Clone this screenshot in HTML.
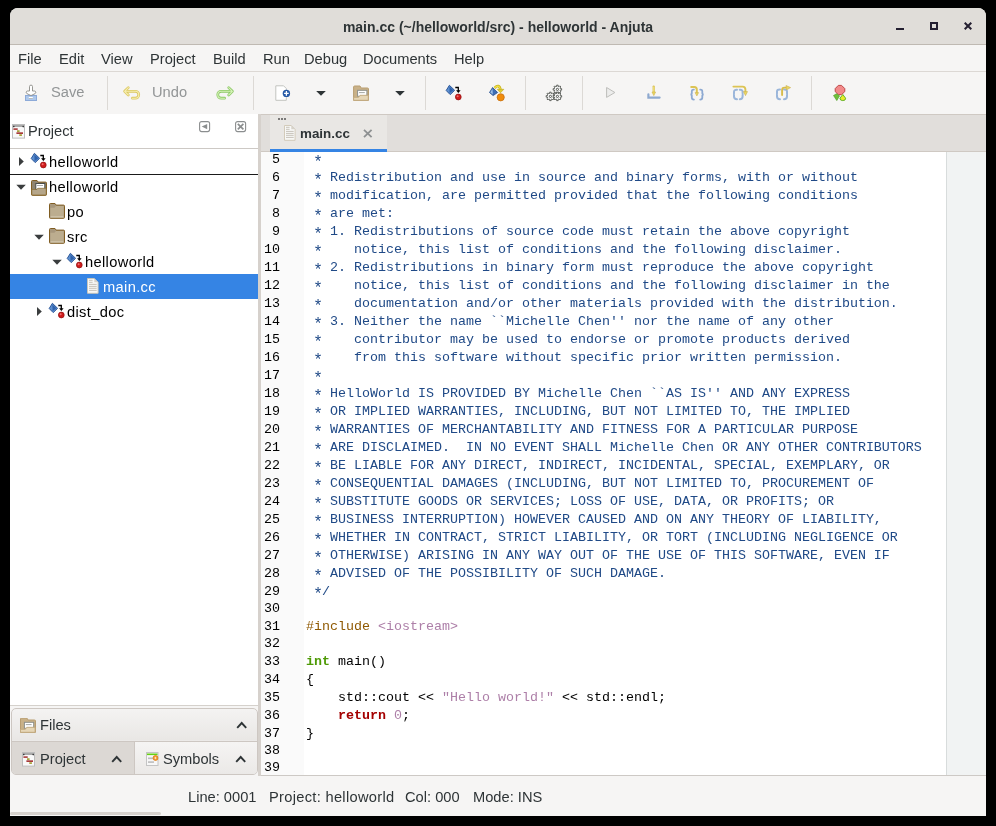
<!DOCTYPE html>
<html><head><meta charset="utf-8">
<style>
*{margin:0;padding:0;box-sizing:border-box}
html,body{width:996px;height:826px;background:#000;overflow:hidden;-webkit-font-smoothing:antialiased}
body>*{will-change:transform}
body{position:relative;font-family:"Liberation Sans",sans-serif;font-size:14.67px;color:#2e3436;--o:-3px}
.a{position:absolute}
.r{position:absolute;white-space:nowrap;line-height:17px}
#win{position:absolute;left:10px;top:8px;width:976px;height:808px;background:#f6f5f4;border-radius:8px 8px 0 0;overflow:hidden}
#title{position:absolute;left:10px;top:8px;width:976px;height:37px;background:#e0ddd9;border-bottom:1px solid #bfb9b2;border-radius:8px 8px 0 0}
#title .t{position:absolute;left:0;width:976px;top:11px;text-align:center;font-weight:bold;font-size:14px;color:#2e3436;line-height:17px}
.menu{position:absolute;top:51px;line-height:17px}
.sep{position:absolute;top:76px;width:1px;height:34px;background:#dcd9d5}
.gt{position:absolute;color:#929596;top:84px;line-height:17px}
.ln{position:absolute;left:258px;width:22px;text-align:right;font-family:"Liberation Mono",monospace;font-size:13.33px;line-height:18px;color:#000}
.cl{position:absolute;left:306px;white-space:pre;font-family:"Liberation Mono",monospace;font-size:13.33px;line-height:18px;color:#000}
.as{display:inline-block;position:relative;top:3px;transform:scale(1.2)}
.cm{color:#204a87}
.pp{color:#8f5902}
.st{color:#ad7fa8}
.ty{color:#4e9a06;font-weight:bold}
.kw{color:#a40000;font-weight:bold}
.tr{position:absolute;left:10px;width:248px;height:25px;line-height:25px;color:#000}
.tr span{position:absolute;top:1px;white-space:nowrap;letter-spacing:0.35px}
</style></head><body>
<div id="win"></div>
<div id="title"><div class="t">main.cc (~/helloworld/src) - helloworld - Anjuta</div></div>
<!-- window controls -->
<div class="a" style="left:896px;top:28px;width:8px;height:2px;background:#241f31"></div>
<div class="a" style="left:930px;top:22px;width:8px;height:8px;border:2px solid #241f31"></div>
<svg class="a" style="left:964px;top:22px" width="8" height="8" viewBox="0 0 8 8"><path d="M0.7 0.7L7.3 7.3M7.3 0.7L0.7 7.3" stroke="#241f31" stroke-width="2"/></svg>

<!-- menubar -->
<div class="a" style="left:10px;top:71px;width:976px;height:1px;background:#dcd8d4"></div>
<div class="menu" style="left:18px">File</div>
<div class="menu" style="left:59px">Edit</div>
<div class="menu" style="left:101px">View</div>
<div class="menu" style="left:150px">Project</div>
<div class="menu" style="left:213px">Build</div>
<div class="menu" style="left:263px">Run</div>
<div class="menu" style="left:304px">Debug</div>
<div class="menu" style="left:363px">Documents</div>
<div class="menu" style="left:454px">Help</div>

<!-- toolbar -->
<div class="gt" style="left:51px">Save</div>
<div class="sep" style="left:107px"></div>
<div class="gt" style="left:152px">Undo</div>
<div class="sep" style="left:253px"></div>
<div class="sep" style="left:425px"></div>
<div class="sep" style="left:525px"></div>
<div class="sep" style="left:582px"></div>
<div class="sep" style="left:811px"></div>
<!-- Save -->
<svg class="a" style="left:20px;top:80px" width="24" height="24" viewBox="0 0 24 24">
<rect x="5.5" y="15.5" width="11" height="5" fill="#adc8ec" stroke="#8daad8"/>
<rect x="8.8" y="17" width="4" height="1.7" fill="#fff"/>
<rect x="8.8" y="18.2" width="4" height="0.6" fill="#9a9a96"/>
<path d="M9.5,11 V6.6 a1.5,1.5 0 0 1 3,0 V11 h2 a1.4,1.4 0 0 1 0.6,2.6 L11,15.6 L6.9,13.6 A1.4,1.4 0 0 1 7.5,11 Z" fill="#fff" stroke="#8c8c88" stroke-width="0.9"/>
</svg>
<!-- Undo -->
<svg class="a" style="left:118px;top:80px" width="24" height="24" viewBox="0 0 24 24">
<g fill="none" stroke-linecap="round" stroke-linejoin="round">
<path d="M10.3,7.6 L6.6,11.3 L10.3,15 M7.5,11.3 H17.3 A3.4,3.4 0 0 1 17.3,18.2 H14.4" stroke="#dcc862" stroke-width="2.7"/>
<path d="M10.3,7.6 L6.6,11.3 L10.3,15 M7.5,11.3 H17.3 A3.4,3.4 0 0 1 17.3,18.2 H14.4" stroke="#f6eeb0" stroke-width="1.1"/>
</g></svg>
<!-- Redo -->
<svg class="a" style="left:213px;top:80px" width="24" height="24" viewBox="0 0 24 24">
<g fill="none" stroke-linecap="round" stroke-linejoin="round">
<path d="M15.7,7.6 L19.4,11.3 L15.7,15 M18.5,11.3 H8.2 A3.4,3.4 0 0 0 8.2,18.2 H11.6" stroke="#8cc866" stroke-width="2.7"/>
<path d="M15.7,7.6 L19.4,11.3 L15.7,15 M18.5,11.3 H8.2 A3.4,3.4 0 0 0 8.2,18.2 H11.6" stroke="#d6f2b8" stroke-width="1.1"/>
</g></svg>
<div class="sep" style="left:253px"></div>
<!-- New -->
<svg class="a" style="left:270px;top:80px" width="24" height="24" viewBox="0 0 24 24">
<path d="M5.8,5.8 H13.6 L16.3,8.5 V20.3 H5.8 Z" fill="#fff" stroke="#c2c4bf" stroke-width="1"/>
<circle cx="16.4" cy="13.4" r="3.7" fill="#2559a6"/>
<path d="M16.4,11.1 V15.7 M14.1,13.4 H18.7" stroke="#fff" stroke-width="1.3"/>
</svg>
<svg class="a" style="left:310px;top:80px" width="24" height="24" viewBox="0 0 24 24"><path d="M6.2,11.1 H15.8 L11,15.8 Z" fill="#2e3436"/></svg>
<!-- Open -->
<svg class="a" style="left:348px;top:80px" width="24" height="24" viewBox="0 0 24 24">
<path d="M5.6,20.3 V7 a1,1 0 0 1 1,-1 H12 l1.2,2 H19.5 a1,1 0 0 1 1,1 V20.3 Z" fill="#c9b188" stroke="#b89d70" stroke-width="1"/>
<rect x="9.6" y="10.3" width="9.3" height="6" fill="#fff" stroke="#8d8f8a" stroke-width="1"/>
<rect x="11" y="12.2" width="5.8" height="0.9" fill="#9b9d98"/>
<path d="M5.6,20.3 V17.3 H10.5 L12,15.3 H20.3 V20.3 Z" fill="#e6d6b6" stroke="#c1a87c" stroke-width="0.9"/>
</svg>
<svg class="a" style="left:389px;top:80px" width="24" height="24" viewBox="0 0 24 24"><path d="M6.2,11.1 H15.8 L11,15.8 Z" fill="#2e3436"/></svg>
<!-- Build 1 -->
<svg class="a" style="left:441px;top:80px" width="24" height="24" viewBox="0 0 24 24">
<path d="M8.4,5.3 L13.6,10.3 L9.2,14.6 L5.2,10.5 Z" fill="#5d8fcf" stroke="#2a5597" stroke-width="1"/>
<path d="M8.4,6.5 L8.6,13.2 L12.4,10.3 Z" fill="#2f62ad"/>
<path d="M14.3,7.5 H17.3 V11" fill="none" stroke="#000" stroke-width="1.3"/>
<path d="M15.1,10.2 H19.6 L17.35,12.9 Z" fill="#000"/>
<circle cx="17.3" cy="17" r="2.9" fill="#d01c1c" stroke="#8f0d0d" stroke-width="0.7"/>
<circle cx="16.6" cy="16.3" r="1" fill="#f07070"/>
</svg>
<!-- Build 2 -->
<svg class="a" style="left:485px;top:80px" width="24" height="24" viewBox="0 0 24 24">
<path d="M7.6,7.5 L12.6,12.5 L8.1,15.6 L4.5,12.5 Z" fill="#3d6db4" stroke="#234d8f" stroke-width="0.8"/>
<path d="M7.5,8.5 L7.8,14.5 L5.3,12.4 Z" fill="#9cc0e8"/>
<path d="M9.6,8 Q14,3.5 15.5,9.5" fill="none" stroke="#c8b21a" stroke-width="2.6"/>
<path d="M9.6,8 Q14,3.5 15.5,9.5" fill="none" stroke="#f2e34a" stroke-width="1.2"/>
<path d="M12.3,9.3 H18.8 L15.5,12.8 Z" fill="#e2cf2e" stroke="#b8a214" stroke-width="0.6"/>
<circle cx="15.7" cy="17.3" r="3.6" fill="#f08c0c" stroke="#c87010" stroke-width="0.8"/>
</svg>
<!-- Gears -->
<svg class="a" style="left:542px;top:80px" width="24" height="24" viewBox="0 0 24 24">
<g fill="#fff" stroke="#4f524e" stroke-width="0.9" stroke-linejoin="round">
<path d="M18.31,8.69 L19.63,8.63 L19.63,10.17 L18.31,10.11 L17.96,10.96 L18.94,11.85 L17.85,12.94 L16.96,11.96 L16.11,12.31 L16.17,13.63 L14.63,13.63 L14.69,12.31 L13.84,11.96 L12.95,12.94 L11.86,11.85 L12.84,10.96 L12.49,10.11 L11.17,10.17 L11.17,8.63 L12.49,8.69 L12.84,7.84 L11.86,6.95 L12.95,5.86 L13.84,6.84 L14.69,6.49 L14.63,5.17 L16.17,5.17 L16.11,6.49 L16.96,6.84 L17.85,5.86 L18.94,6.95 L17.96,7.84 Z"/>
<path d="M11.31,15.69 L12.63,15.63 L12.63,17.17 L11.31,17.11 L10.96,17.96 L11.94,18.85 L10.85,19.94 L9.96,18.96 L9.11,19.31 L9.17,20.63 L7.63,20.63 L7.69,19.31 L6.84,18.96 L5.95,19.94 L4.86,18.85 L5.84,17.96 L5.49,17.11 L4.17,17.17 L4.17,15.63 L5.49,15.69 L5.84,14.84 L4.86,13.95 L5.95,12.86 L6.84,13.84 L7.69,13.49 L7.63,12.17 L9.17,12.17 L9.11,13.49 L9.96,13.84 L10.85,12.86 L11.94,13.95 L10.96,14.84 Z"/>
<path d="M18.31,15.69 L19.63,15.63 L19.63,17.17 L18.31,17.11 L17.96,17.96 L18.94,18.85 L17.85,19.94 L16.96,18.96 L16.11,19.31 L16.17,20.63 L14.63,20.63 L14.69,19.31 L13.84,18.96 L12.95,19.94 L11.86,18.85 L12.84,17.96 L12.49,17.11 L11.17,17.17 L11.17,15.63 L12.49,15.69 L12.84,14.84 L11.86,13.95 L12.95,12.86 L13.84,13.84 L14.69,13.49 L14.63,12.17 L16.17,12.17 L16.11,13.49 L16.96,13.84 L17.85,12.86 L18.94,13.95 L17.96,14.84 Z"/>
<circle cx="15.4" cy="9.4" r="1.1" stroke-width="1"/><circle cx="15.4" cy="16.4" r="1.1" stroke-width="1"/><circle cx="8.4" cy="16.4" r="1.1" stroke-width="1"/>
</g></svg>
<!-- Run -->
<svg class="a" style="left:598px;top:80px" width="24" height="24" viewBox="0 0 24 24">
<path d="M8.6,7.5 L16.9,12.5 L8.6,17.4 Z" fill="#ececeb" stroke="#bdbdba" stroke-width="1"/>
</svg>
<!-- Step -->
<svg class="a" style="left:642px;top:80px" width="24" height="24" viewBox="0 0 24 24">
<path d="M6.4,14.4 V17.6 H17.6" fill="none" stroke="#8ea9cf" stroke-width="2.2" stroke-linecap="round"/>
<path d="M11.7,6.6 V12" stroke="#d9c052" stroke-width="2.2" stroke-linecap="round"/>
<path d="M11.7,6.6 V12" stroke="#f1e27c" stroke-width="1"/>
<path d="M10,12 H13.6 L11.8,15.6 Z" fill="#ecd860" stroke="#cdb249" stroke-width="0.6"/>
</svg>
<!-- Step in -->
<svg class="a" style="left:685px;top:80px" width="24" height="24" viewBox="0 0 24 24">
<g fill="none" stroke="#8eaad2" stroke-width="1.8" stroke-linecap="round">
<path d="M8.9,9.6 Q6.8,9.4 6.8,11.5 V13.4 Q6.8,14.5 5.4,14.5 Q6.8,14.5 6.8,15.6 V17.6 Q6.8,19.6 8.9,19.6"/>
<path d="M15.2,9.6 Q17.3,9.4 17.3,11.5 V13.4 Q17.3,14.5 18.7,14.5 Q17.3,14.5 17.3,15.6 V17.6 Q17.3,19.6 15.2,19.6"/>
</g>
<path d="M6.2,7 H9.3 Q11.8,7 11.8,9.6 V12.8" fill="none" stroke="#dcc454" stroke-width="2" stroke-linecap="round"/>
<path d="M10.1,12.6 H13.6 L11.85,15.9 Z" fill="#ecd860" stroke="#c9ae52" stroke-width="0.6"/>
</svg>
<!-- Step over -->
<svg class="a" style="left:727px;top:80px" width="24" height="24" viewBox="0 0 24 24">
<g fill="none" stroke="#9bb6da" stroke-width="2" stroke-linecap="round">
<path d="M10,9.8 Q7,9.6 7,12 V13.4 Q7,14 6,14 Q7,14 7,14.6 V16.6 Q7,19.2 10,19.2"/>
<path d="M12.8,9.8 Q15.6,9.6 15.6,12 V13.4 Q15.6,14 16.6,14 Q15.6,14 15.6,14.6 V16.6 Q15.6,19.2 12.8,19.2"/>
</g>
<path d="M6.4,6.6 H15.6 Q18.4,6.6 18.4,9.5 V12" fill="none" stroke="#dcc454" stroke-width="1.9" stroke-linecap="round"/>
<path d="M16.4,11.6 H20.5 L18.5,15.6 Z" fill="#ecd860" stroke="#c9ae52" stroke-width="0.6"/>
</svg>
<!-- Step out -->
<svg class="a" style="left:770px;top:80px" width="24" height="24" viewBox="0 0 24 24">
<g fill="none" stroke="#9bb6da" stroke-width="2" stroke-linecap="round">
<path d="M10,9.4 Q7,9.2 7,11.6 V13.4 Q7,14 6,14 Q7,14 7,14.6 V16.6 Q7,19.2 10,19.2"/>
<path d="M14,9.4 Q17,9.2 17,11.6 V13.4 Q17,14 18,14 Q17,14 17,14.6 V16.6 Q17,19.2 14,19.2"/>
</g>
<path d="M12.1,15 V10 Q12.1,7.6 14.5,7.6 H16.8" fill="none" stroke="#d8bc4a" stroke-width="1.9" stroke-linecap="round"/>
<path d="M16,5.5 L20.6,7.6 L16.4,9.9 Z" fill="#ecd860" stroke="#c9ae52" stroke-width="0.6"/>
</svg>
<!-- Debug -->
<svg class="a" style="left:827px;top:80px" width="24" height="24" viewBox="0 0 24 24">
<path d="M11.3,5.4 H14.6 L17.8,8.6 V11.6 L14.6,14.6 H11.3 L8.2,11.6 V8.6 Z" fill="#f28a8a" stroke="#b93b3b" stroke-width="0.9"/>
<path d="M6.5,15.5 L9.5,13.8 L12.6,15.8 L9.8,20.6 Z" fill="#6fbf3a" stroke="#4a9a1e" stroke-width="0.6"/>
<path d="M15.8,14.5 L18.6,18.2 Q18.8,20.6 15.8,20.6 Q12.8,20.6 13,18.2 Z" fill="#e8ec2a" stroke="#5aae22" stroke-width="0.9"/>
</svg>


<!-- left panel -->
<div class="a" style="left:10px;top:114px;width:248px;height:592px;background:#fff"></div>
<div class="a" style="left:10px;top:148px;width:248px;height:1px;background:#cdc9c5"></div>
<div class="r" style="left:28px;top:123px">Project</div>
<div class="a" style="left:10px;top:174px;width:248px;height:1px;background:#1a1a1a"></div>
<div class="a" style="left:10px;top:274px;width:248px;height:25px;background:#3584e4"></div>
<div class="tr" style="top:149px"><span style="left:39px">helloworld</span></div>
<div class="tr" style="top:174px"><span style="left:39px">helloworld</span></div>
<div class="tr" style="top:199px"><span style="left:57px">po</span></div>
<div class="tr" style="top:224px"><span style="left:57px">src</span></div>
<div class="tr" style="top:249px"><span style="left:75px">helloworld</span></div>
<div class="tr" style="top:274px;color:#fff"><span style="left:93px">main.cc</span></div>
<div class="tr" style="top:299px"><span style="left:57px">dist_doc</span></div>
<div class="a" style="left:10px;top:705px;width:248px;height:1px;background:#d5d1cc"></div>

<!-- bottom tabs -->
<div class="a" style="left:11px;top:708px;width:247px;height:67px;border:1px solid #cdc7c2;border-radius:5px;background:linear-gradient(#f4f3f2,#e9e7e5 48%,#f4f3f2 50%,#e9e7e5)"></div>
<div class="a" style="left:11px;top:741px;width:247px;height:1px;background:#cdc7c2"></div>
<div class="a" style="left:12px;top:742px;width:122px;height:32px;background:#dcd8d4;border-radius:0 0 0 4px"></div>
<div class="a" style="left:134px;top:742px;width:123px;height:32px;background:linear-gradient(#f5f4f3,#ebe9e7);border-left:1px solid #cdc7c2;border-radius:0 0 4px 0"></div>
<div class="r" style="left:40px;top:717px">Files</div>
<div class="r" style="left:40px;top:751px">Project</div>
<div class="r" style="left:163px;top:751px">Symbols</div>

<!-- pane separator -->
<div class="a" style="left:258px;top:114px;width:3px;height:662px;background:#d6d1cc"></div>

<!-- editor tab bar -->
<div class="a" style="left:261px;top:114px;width:725px;height:38px;background:#e1dedb;border-top:1px solid #cfc9c3;border-bottom:1px solid #cfc9c3"></div>
<div class="a" style="left:270px;top:115px;width:117px;height:37px;background:#e9e7e4"></div>
<div class="a" style="left:270px;top:149px;width:117px;height:3px;background:#3584e4"></div>
<div class="a" style="left:300px;top:125px;font-weight:bold;font-size:13.4px;line-height:17px">main.cc</div>

<!-- editor -->
<div class="a" style="left:261px;top:152px;width:725px;height:623px;background:#fff"></div>
<div class="a" style="left:261px;top:152px;width:43px;height:623px;background:#fafafa"></div>
<div class="a" style="left:946px;top:152px;width:1px;height:623px;background:#d8dcdc"></div>
<div class="a" style="left:947px;top:152px;width:39px;height:623px;background:#f1f3f3"></div>
<div class="a" style="left:261px;top:775px;width:725px;height:1px;background:#cdc9c5"></div>
<div class="ln" style="top:calc(154px + var(--o))">5</div><div class="cl" style="top:calc(154px + var(--o))"><span class="cm"> <span class="as">*</span></span></div>
<div class="ln" style="top:calc(172px + var(--o))">6</div><div class="cl" style="top:calc(172px + var(--o))"><span class="cm"> <span class="as">*</span> Redistribution and use in source and binary forms, with or without</span></div>
<div class="ln" style="top:calc(190px + var(--o))">7</div><div class="cl" style="top:calc(190px + var(--o))"><span class="cm"> <span class="as">*</span> modification, are permitted provided that the following conditions</span></div>
<div class="ln" style="top:calc(208px + var(--o))">8</div><div class="cl" style="top:calc(208px + var(--o))"><span class="cm"> <span class="as">*</span> are met:</span></div>
<div class="ln" style="top:calc(226px + var(--o))">9</div><div class="cl" style="top:calc(226px + var(--o))"><span class="cm"> <span class="as">*</span> 1. Redistributions of source code must retain the above copyright</span></div>
<div class="ln" style="top:calc(244px + var(--o))">10</div><div class="cl" style="top:calc(244px + var(--o))"><span class="cm"> <span class="as">*</span>    notice, this list of conditions and the following disclaimer.</span></div>
<div class="ln" style="top:calc(262px + var(--o))">11</div><div class="cl" style="top:calc(262px + var(--o))"><span class="cm"> <span class="as">*</span> 2. Redistributions in binary form must reproduce the above copyright</span></div>
<div class="ln" style="top:calc(280px + var(--o))">12</div><div class="cl" style="top:calc(280px + var(--o))"><span class="cm"> <span class="as">*</span>    notice, this list of conditions and the following disclaimer in the</span></div>
<div class="ln" style="top:calc(298px + var(--o))">13</div><div class="cl" style="top:calc(298px + var(--o))"><span class="cm"> <span class="as">*</span>    documentation and/or other materials provided with the distribution.</span></div>
<div class="ln" style="top:calc(316px + var(--o))">14</div><div class="cl" style="top:calc(316px + var(--o))"><span class="cm"> <span class="as">*</span> 3. Neither the name ``Michelle Chen&#x27;&#x27; nor the name of any other</span></div>
<div class="ln" style="top:calc(334px + var(--o))">15</div><div class="cl" style="top:calc(334px + var(--o))"><span class="cm"> <span class="as">*</span>    contributor may be used to endorse or promote products derived</span></div>
<div class="ln" style="top:calc(352px + var(--o))">16</div><div class="cl" style="top:calc(352px + var(--o))"><span class="cm"> <span class="as">*</span>    from this software without specific prior written permission.</span></div>
<div class="ln" style="top:calc(370px + var(--o))">17</div><div class="cl" style="top:calc(370px + var(--o))"><span class="cm"> <span class="as">*</span></span></div>
<div class="ln" style="top:calc(388px + var(--o))">18</div><div class="cl" style="top:calc(388px + var(--o))"><span class="cm"> <span class="as">*</span> HelloWorld IS PROVIDED BY Michelle Chen ``AS IS&#x27;&#x27; AND ANY EXPRESS</span></div>
<div class="ln" style="top:calc(406px + var(--o))">19</div><div class="cl" style="top:calc(406px + var(--o))"><span class="cm"> <span class="as">*</span> OR IMPLIED WARRANTIES, INCLUDING, BUT NOT LIMITED TO, THE IMPLIED</span></div>
<div class="ln" style="top:calc(424px + var(--o))">20</div><div class="cl" style="top:calc(424px + var(--o))"><span class="cm"> <span class="as">*</span> WARRANTIES OF MERCHANTABILITY AND FITNESS FOR A PARTICULAR PURPOSE</span></div>
<div class="ln" style="top:calc(442px + var(--o))">21</div><div class="cl" style="top:calc(442px + var(--o))"><span class="cm"> <span class="as">*</span> ARE DISCLAIMED.  IN NO EVENT SHALL Michelle Chen OR ANY OTHER CONTRIBUTORS</span></div>
<div class="ln" style="top:calc(460px + var(--o))">22</div><div class="cl" style="top:calc(460px + var(--o))"><span class="cm"> <span class="as">*</span> BE LIABLE FOR ANY DIRECT, INDIRECT, INCIDENTAL, SPECIAL, EXEMPLARY, OR</span></div>
<div class="ln" style="top:calc(478px + var(--o))">23</div><div class="cl" style="top:calc(478px + var(--o))"><span class="cm"> <span class="as">*</span> CONSEQUENTIAL DAMAGES (INCLUDING, BUT NOT LIMITED TO, PROCUREMENT OF</span></div>
<div class="ln" style="top:calc(496px + var(--o))">24</div><div class="cl" style="top:calc(496px + var(--o))"><span class="cm"> <span class="as">*</span> SUBSTITUTE GOODS OR SERVICES; LOSS OF USE, DATA, OR PROFITS; OR</span></div>
<div class="ln" style="top:calc(514px + var(--o))">25</div><div class="cl" style="top:calc(514px + var(--o))"><span class="cm"> <span class="as">*</span> BUSINESS INTERRUPTION) HOWEVER CAUSED AND ON ANY THEORY OF LIABILITY,</span></div>
<div class="ln" style="top:calc(532px + var(--o))">26</div><div class="cl" style="top:calc(532px + var(--o))"><span class="cm"> <span class="as">*</span> WHETHER IN CONTRACT, STRICT LIABILITY, OR TORT (INCLUDING NEGLIGENCE OR</span></div>
<div class="ln" style="top:calc(550px + var(--o))">27</div><div class="cl" style="top:calc(550px + var(--o))"><span class="cm"> <span class="as">*</span> OTHERWISE) ARISING IN ANY WAY OUT OF THE USE OF THIS SOFTWARE, EVEN IF</span></div>
<div class="ln" style="top:calc(568px + var(--o))">28</div><div class="cl" style="top:calc(568px + var(--o))"><span class="cm"> <span class="as">*</span> ADVISED OF THE POSSIBILITY OF SUCH DAMAGE.</span></div>
<div class="ln" style="top:calc(586px + var(--o))">29</div><div class="cl" style="top:calc(586px + var(--o))"><span class="cm"> <span class="as">*</span>/</span></div>
<div class="ln" style="top:calc(603px + var(--o))">30</div><div class="cl" style="top:calc(603px + var(--o))"></div>
<div class="ln" style="top:calc(621px + var(--o))">31</div><div class="cl" style="top:calc(621px + var(--o))"><span class="pp">#include</span> <span class="st">&lt;iostream&gt;</span></div>
<div class="ln" style="top:calc(638px + var(--o))">32</div><div class="cl" style="top:calc(638px + var(--o))"></div>
<div class="ln" style="top:calc(656px + var(--o))">33</div><div class="cl" style="top:calc(656px + var(--o))"><span class="ty">int</span> main()</div>
<div class="ln" style="top:calc(674px + var(--o))">34</div><div class="cl" style="top:calc(674px + var(--o))">{</div>
<div class="ln" style="top:calc(692px + var(--o))">35</div><div class="cl" style="top:calc(692px + var(--o))">    std::cout &lt;&lt; <span class="st">"Hello world!"</span> &lt;&lt; std::endl;</div>
<div class="ln" style="top:calc(710px + var(--o))">36</div><div class="cl" style="top:calc(710px + var(--o))">    <span class="kw">return</span> <span class="st">0</span>;</div>
<div class="ln" style="top:calc(728px + var(--o))">37</div><div class="cl" style="top:calc(728px + var(--o))">}</div>
<div class="ln" style="top:calc(745px + var(--o))">38</div><div class="cl" style="top:calc(745px + var(--o))"></div>
<div class="ln" style="top:calc(762px + var(--o))">39</div><div class="cl" style="top:calc(762px + var(--o))"></div>

<svg width="0" height="0" style="position:absolute">
<defs>
<g id="ibuild">
<path d="M8.4,5.3 L13.6,10.3 L9.2,14.6 L5.2,10.5 Z" fill="#5d8fcf" stroke="#2a5597" stroke-width="1"/>
<path d="M8.4,6.5 L8.6,13.2 L12.4,10.3 Z" fill="#2f62ad"/>
<path d="M14.3,7.5 H17.3 V11" fill="none" stroke="#000" stroke-width="1.3"/>
<path d="M15.1,10.2 H19.6 L17.35,12.9 Z" fill="#000"/>
<circle cx="17.3" cy="17" r="2.9" fill="#d01c1c" stroke="#8f0d0d" stroke-width="0.7"/>
<circle cx="16.6" cy="16.3" r="1" fill="#f07070"/>
</g>
<g id="ifile">
<path d="M0.5,0.5 H7.3 L11.1,4.3 V15.3 H0.5 Z" fill="#f8f8f6" stroke="#cfc6b4" stroke-width="0.9"/>
<path d="M7.3,0.5 V4.3 H11.1 Z" fill="#d6d2ca"/>
<g stroke="#c6c2ba" stroke-width="1">
<path d="M2,2.3 H5.6 M2,4.3 H5.6 M2,6.4 H9.7 M2,8.4 H9.7 M2,10.3 H9.7 M2,12.4 H9.7"/>
</g>
</g>
<g id="iproj">
<rect x="0.5" y="0.5" width="12" height="13.6" fill="#f9f9f9" stroke="#bdbdbd" stroke-width="1"/>
<rect x="1" y="1" width="11" height="2" fill="#a9a9a9"/>
<circle cx="1.8" cy="2.6" r="0.8" fill="#333"/><circle cx="11.2" cy="2.6" r="0.8" fill="#333"/>
<rect x="1.4" y="4.3" width="4.3" height="1.6" fill="#a83a3a"/>
<rect x="5" y="6.3" width="2.6" height="1.6" fill="#a09a2a"/>
<rect x="4.4" y="8.3" width="6.6" height="1.7" fill="#a83a3a"/>
<rect x="7.3" y="10.3" width="2.6" height="1.6" fill="#a09a2a"/>
</g>
<g id="ifolder">
<path d="M0.5,14.5 V1.5 a1,1 0 0 1 1,-1 H6 l1.2,1.6 H14.5 a1,1 0 0 1 1,1 V14.5 a0.8,0.8 0 0 1 -0.8,0.8 H1.3 a0.8,0.8 0 0 1 -0.8,-0.8 Z" fill="#a7977c" stroke="#805d22" stroke-width="1"/>
<path d="M1.4,15 V4.8 H5.4 L7,3 H14.6 V15 Z" fill="#bcad8f"/>
<path d="M1.6,13.6 H14.4" stroke="#d2c7b0" stroke-width="0.8"/>
</g>
<g id="ifolderopen">
<path d="M0.5,14.5 V1.5 a1,1 0 0 1 1,-1 H6 l1.2,1.6 H14.5 a1,1 0 0 1 1,1 V14.5 a0.8,0.8 0 0 1 -0.8,0.8 H1.3 a0.8,0.8 0 0 1 -0.8,-0.8 Z" fill="#8f8470" stroke="#805d22" stroke-width="1"/>
<rect x="4.8" y="3.5" width="9" height="6" fill="#fff" stroke="#4a4d4a" stroke-width="1"/>
<rect x="6" y="5.2" width="6" height="0.8" fill="#999"/>
<path d="M0.8,15 V9.4 H5.5 L7,8.3 H15.2 V15 Z" fill="#b5a68a" stroke="#8a6a2e" stroke-width="0.7"/>
</g>
<g id="iopen">
<path d="M0.5,14.3 V1 a1,1 0 0 1 1,-1 H6.8 l1.2,2 H14.5 a1,1 0 0 1 1,1 V14.3 Z" fill="#c9b188" stroke="#b89d70" stroke-width="1"/>
<rect x="4.4" y="4.3" width="9.3" height="6" fill="#fff" stroke="#8d8f8a" stroke-width="1"/>
<rect x="5.8" y="6.2" width="5.8" height="0.9" fill="#9b9d98"/>
<path d="M0.4,14.3 V11.3 H5.3 L6.8,9.3 H15.1 V14.3 Z" fill="#e6d6b6" stroke="#c1a87c" stroke-width="0.9"/>
</g>
</defs></svg>

<!-- panel header -->
<svg class="a" style="left:12px;top:124px" width="14" height="15"><use href="#iproj"/></svg>
<svg class="a" style="left:198px;top:120px" width="14" height="14" viewBox="0 0 14 14">
<rect x="1.6" y="1.6" width="10" height="10" rx="2" fill="none" stroke="#8b8e8f" stroke-width="1.1"/>
<path d="M3.7,6.6 L9.2,4 V9.2 Z" fill="#8b8e8f"/>
</svg>
<svg class="a" style="left:234px;top:120px" width="14" height="14" viewBox="0 0 14 14">
<rect x="1.6" y="1.6" width="10" height="10" rx="2" fill="none" stroke="#8b8e8f" stroke-width="1.1"/>
<path d="M3.8,3.8 L9.4,9.4 M9.4,3.8 L3.8,9.4" stroke="#8b8e8f" stroke-width="1.7"/>
</svg>

<!-- tree -->
<svg class="a" style="left:18px;top:156px" width="7" height="11" viewBox="0 0 7 11"><path d="M1,1 L5.8,5.5 L1,10 Z" fill="#3a3d3e"/></svg>
<svg class="a" style="left:26px;top:148px" width="24" height="24"><use href="#ibuild"/></svg>

<svg class="a" style="left:16px;top:184px" width="11" height="7" viewBox="0 0 11 7"><path d="M0.3,0.8 H9.8 L5,5.7 Z" fill="#3a3d3e"/></svg>
<svg class="a" style="left:31px;top:180px" width="16" height="16"><use href="#ifolderopen"/></svg>

<svg class="a" style="left:49px;top:203px" width="16" height="16"><use href="#ifolder"/></svg>

<svg class="a" style="left:34px;top:234px" width="11" height="7" viewBox="0 0 11 7"><path d="M0.3,0.8 H9.8 L5,5.7 Z" fill="#3a3d3e"/></svg>
<svg class="a" style="left:49px;top:228px" width="16" height="16"><use href="#ifolder"/></svg>

<svg class="a" style="left:52px;top:259px" width="11" height="7" viewBox="0 0 11 7"><path d="M0.3,0.8 H9.8 L5,5.7 Z" fill="#3a3d3e"/></svg>
<svg class="a" style="left:62px;top:248px" width="24" height="24"><use href="#ibuild"/></svg>

<svg class="a" style="left:87px;top:278px" width="12" height="16"><use href="#ifile"/></svg>

<svg class="a" style="left:36px;top:306px" width="7" height="11" viewBox="0 0 7 11"><path d="M1,1 L5.8,5.5 L1,10 Z" fill="#3a3d3e"/></svg>
<svg class="a" style="left:44px;top:298px" width="24" height="24"><use href="#ibuild"/></svg>

<!-- bottom tabs -->
<svg class="a" style="left:20px;top:718px" width="16" height="16"><use href="#iopen"/></svg>
<svg class="a" style="left:236px;top:721px" width="12" height="8" viewBox="0 0 12 8"><path d="M1.2,6.8 L5.7,2 L10.2,6.8" fill="none" stroke="#2e3436" stroke-width="1.9"/></svg>
<svg class="a" style="left:22px;top:752px" width="14" height="15"><use href="#iproj"/></svg>
<svg class="a" style="left:111px;top:755px" width="12" height="8" viewBox="0 0 12 8"><path d="M1.2,6.8 L5.7,2 L10.2,6.8" fill="none" stroke="#2e3436" stroke-width="1.9"/></svg>
<svg class="a" style="left:146px;top:752px" width="13" height="14" viewBox="0 0 13 14">
<rect x="0.5" y="0.5" width="11.5" height="13" fill="#f7f7f7" stroke="#c4c4c4" stroke-width="1"/>
<rect x="1" y="1.5" width="10.5" height="1.6" fill="#66d012"/>
<rect x="2" y="5.5" width="5" height="1.6" fill="#bdbdbd"/>
<rect x="2" y="9.3" width="6" height="1.6" fill="#bdbdbd"/>
<circle cx="9.5" cy="6" r="2.4" fill="#f3a23c" stroke="#e07a10" stroke-width="0.9"/>
<circle cx="9.4" cy="6" r="0.8" fill="#fff"/>
</svg>
<svg class="a" style="left:235px;top:755px" width="12" height="8" viewBox="0 0 12 8"><path d="M1.2,6.8 L5.7,2 L10.2,6.8" fill="none" stroke="#2e3436" stroke-width="1.9"/></svg>

<!-- editor tab -->
<svg class="a" style="left:278px;top:117px" width="10" height="4" viewBox="0 0 10 4"><circle cx="1" cy="2" r="1" fill="#555"/><circle cx="4" cy="2" r="1" fill="#555"/><circle cx="7" cy="2" r="1" fill="#555"/></svg>
<svg class="a" style="left:284px;top:125px" width="12" height="16"><use href="#ifile"/></svg>
<svg class="a" style="left:363px;top:129px" width="10" height="9" viewBox="0 0 10 9"><path d="M1,0.8 L8.6,8.2 M8.6,0.8 L1,8.2" stroke="#8e9192" stroke-width="1.8"/></svg>

<div class="a" style="left:10px;top:812px;width:151px;height:3px;background:#d6d1cc;border-radius:2px"></div>
<!-- status bar -->
<div class="r" style="left:188px;top:789px">Line: 0001</div>
<div class="r" style="left:269px;top:789px;letter-spacing:0.3px">Project: helloworld</div>
<div class="r" style="left:405px;top:789px">Col: 000</div>
<div class="r" style="left:473px;top:789px">Mode: INS</div>
</body></html>
